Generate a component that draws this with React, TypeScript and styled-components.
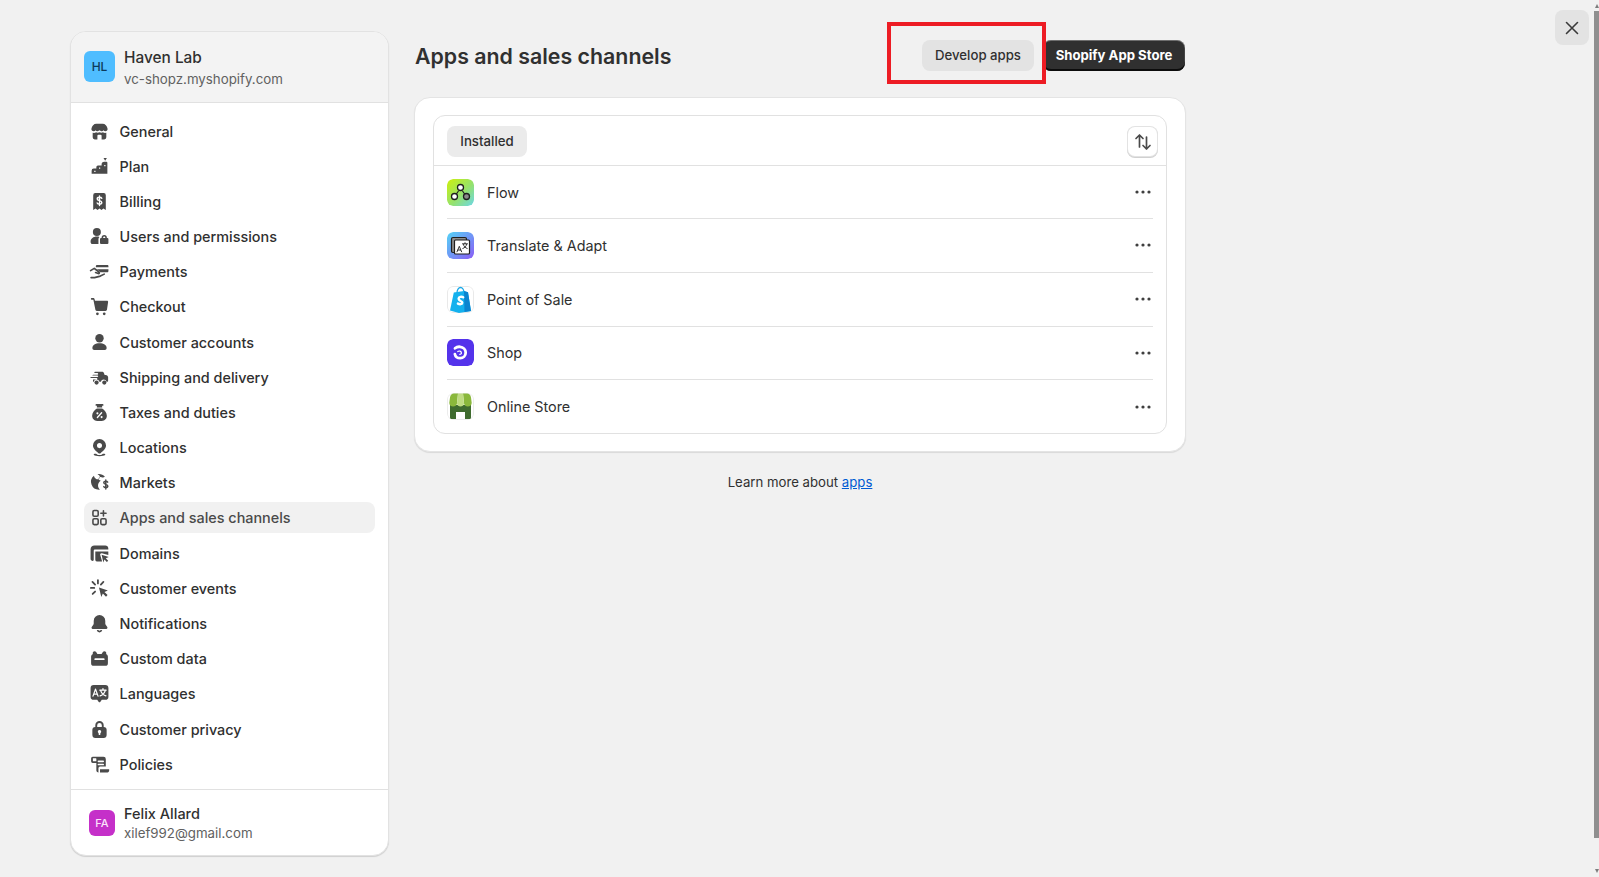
import { ReactNode } from "react";
import styled, { createGlobalStyle } from "styled-components";

const GlobalStyle = createGlobalStyle`
  html, body {
    margin: 0;
    height: 100%;
    overflow: hidden;
    background: #f1f1f1;
  }
  body {
    font-family: Inter, "Noto Sans", sans-serif;
    font-size: 14px;
    color: #303030;
  }
  * {
    box-sizing: border-box;
  }
`;

const Page = styled.div`
  display: flex;
  align-items: flex-start;
  gap: 26px;
  height: 877px;
  padding: 31px 0 0 70px;
  background: #f1f1f1;
`;

const Sidebar = styled.aside`
  display: flex;
  flex-direction: column;
  width: 319px;
  height: 825px;
  flex-shrink: 0;
  overflow: hidden;
  background: #fff;
  border: 1px solid #e2e2e2;
  border-radius: 16px;
  box-shadow: 0 1px 1px rgba(0, 0, 0, 0.14);
`;

const ShopHeader = styled.header`
  display: flex;
  align-items: center;
  gap: 9px;
  height: 71px;
  padding: 0 13px 1px;
  background: #f3f3f3;
  border-bottom: 1px solid #e1e1e1;
`;

const Avatar = styled.div<{ $size: number; $bg: string; $fg: string }>`
  display: flex;
  align-items: center;
  justify-content: center;
  width: ${({ $size }) => $size}px;
  height: ${({ $size }) => $size}px;
  flex-shrink: 0;
  border-radius: 6px;
  font-family: Inter, sans-serif;
  font-size: ${({ $size }) => ($size > 28 ? 12 : 11)}px;
  font-weight: 500;
  color: ${({ $fg }) => $fg};
  background: ${({ $bg }) => $bg};
`;

const AccountText = styled.div`
  display: flex;
  flex-direction: column;
  gap: 3px;
  padding-top: 4px;
`;

const AccountName = styled.div`
  font-size: 15.4px;
  line-height: 18px;
  font-weight: 500;
  color: #303030;
`;

const AccountMeta = styled.div`
  font-size: 13.3px;
  line-height: 18px;
  color: #616161;
`;

const Nav = styled.nav`
  display: flex;
  flex: 1;
  flex-direction: column;
  gap: 4.18px;
  padding: 12.6px 13px 0;
`;

const NavRow = styled.a<{ $active?: boolean }>`
  display: flex;
  align-items: center;
  gap: 9.6px;
  height: 31px;
  padding-left: 5px;
  border-radius: 8px;
  font-size: 14.4px;
  font-weight: 500;
  color: ${({ $active }) => ($active ? "#4a4a4a" : "#303030")};
  background: ${({ $active }) => ($active ? "#f1f1f1" : "transparent")};
`;

const NavIcon = styled.svg`
  width: 21px;
  height: 21px;
  flex-shrink: 0;
  fill: #4a4a4a;
`;

const UserFooter = styled.footer`
  display: flex;
  align-items: center;
  gap: 9px;
  height: 66px;
  padding: 0 13px 0 18px;
  border-top: 1px solid #e1e1e1;
`;

const UserText = styled.div`
  display: flex;
  flex-direction: column;
  gap: 1px;
  padding-top: 2px;
`;

const UserName = styled.div`
  font-size: 14.5px;
  line-height: 18px;
  font-weight: 500;
  color: #303030;
`;

const Main = styled.main`
  display: flex;
  flex-direction: column;
  width: 770px;
  padding-top: 9px;
`;

const TitleBar = styled.div`
  display: flex;
  align-items: center;
  justify-content: space-between;
  height: 31px;
`;

const Title = styled.h1`
  margin: 0;
  padding-top: 2px;
  font-size: 21.35px;
  line-height: 31px;
  font-weight: 600;
  color: #303030;
`;

const Actions = styled.div`
  display: flex;
  align-items: center;
  gap: 9px;
`;

const HighlightWrap = styled.div`
  position: relative;
`;

const Highlight = styled.div`
  position: absolute;
  top: -18px;
  right: -12px;
  bottom: -13px;
  left: -35px;
  border: 4px solid #ed1c24;
  pointer-events: none;
`;

const PlainButton = styled.button`
  display: block;
  width: 112px;
  height: 31px;
  padding: 0 0 2px;
  border: 0;
  border-radius: 8px;
  font: 500 13.2px Inter, sans-serif;
  color: #303030;
  background: #e3e3e3;
`;

const PrimaryButton = styled.button`
  display: block;
  width: 142px;
  height: 31px;
  padding: 0 0 2px;
  border: 0;
  border-radius: 8px;
  font: 650 13.15px Inter, sans-serif;
  color: #fff;
  background: #303030;
  box-shadow: inset 0 1px 0 rgba(255, 255, 255, 0.3), inset 0 -2px 0 #0c0c0c, inset 1px 0 0 rgba(255, 255, 255, 0.1), inset -1px 0 0 rgba(255, 255, 255, 0.1);
`;

const Card = styled.section`
  margin: 26px -1px 0;
  padding: 17px 18px;
  background: #fff;
  border: 1px solid #e4e4e4;
  border-radius: 16px;
  box-shadow: 0 1px 1px rgba(0, 0, 0, 0.1);
`;

const AppList = styled.div`
  border: 1px solid #e1e1e1;
  border-radius: 12px;
`;

const ListHead = styled.div`
  display: flex;
  align-items: center;
  justify-content: space-between;
  height: 50px;
  padding: 2px 9px 0 13px;
  border-bottom: 1px solid #e1e1e1;
`;

const Tab = styled.div`
  display: flex;
  align-items: center;
  justify-content: center;
  width: 80px;
  height: 31px;
  padding-bottom: 1px;
  border-radius: 8px;
  font-size: 13.25px;
  font-weight: 500;
  color: #303030;
  background: #ebebeb;
`;

const SortButton = styled.button`
  display: flex;
  align-items: center;
  justify-content: center;
  width: 29px;
  height: 29px;
  padding: 0;
  border: 0;
  border-radius: 7px;
  background: #fff;
  box-shadow: 0 0 0 1px #e3e3e3, 0 1px 0 1px #d0d0d0;
`;

const SortGlyph = styled.svg`
  width: 20px;
  height: 20px;
  fill: none;
  stroke: #4a4a4a;
  stroke-width: 1.7;
  stroke-linecap: round;
  stroke-linejoin: round;
`;

const AppRows = styled.div`
  display: flex;
  flex-direction: column;
  padding: 0 13px;
`;

const AppRow = styled.div`
  display: flex;
  align-items: center;
  gap: 13px;
  height: 53.75px;
  border-top: 1px solid #e1e1e1;

  &:first-child {
    height: 52px;
    border-top: 0;
  }
`;

const AppIcon = styled.svg`
  display: block;
  width: 27px;
  height: 27px;
  flex-shrink: 0;
  border-radius: 6px;
`;

const AppName = styled.div`
  flex: 1;
  font-size: 14.37px;
  color: #303030;
`;

const MoreDots = styled.svg`
  width: 20px;
  height: 20px;
  fill: #3f3f3f;
`;

const LearnMore = styled.p`
  margin: 20px 0 0;
  font-size: 13.2px;
  line-height: 20px;
  text-align: center;
  color: #303030;
`;

const InlineLink = styled.a`
  color: #005bd3;
  text-decoration: underline;
`;

const CloseButton = styled.button`
  position: fixed;
  top: 10px;
  left: 1555px;
  display: flex;
  align-items: center;
  justify-content: center;
  width: 34px;
  height: 35px;
  padding: 0;
  border: 0;
  border-radius: 8px;
  background: #e3e3e3;
`;

const CloseGlyph = styled.svg`
  width: 20px;
  height: 20px;
  fill: none;
  stroke: #3a3a3a;
  stroke-width: 1.6;
  stroke-linecap: round;
`;

const ScrollTrack = styled.div`
  position: fixed;
  top: 0;
  right: 0;
  bottom: 0;
  display: flex;
  flex-direction: column;
  align-items: center;
  width: 5px;
  background: #f1f1f1;
`;

const ScrollArrow = styled.div<{ $down?: boolean }>`
  width: 0;
  height: 0;
  flex-shrink: 0;
  margin: ${({ $down }) => ($down ? "auto 0 4px" : "4px 0 0")};
  border-left: 2.5px solid transparent;
  border-right: 2.5px solid transparent;
  ${({ $down }) => ($down ? "border-top: 4px solid #7d7d7d;" : "border-bottom: 4px solid #7d7d7d;")}
`;

const ScrollThumb = styled.div`
  width: 5px;
  height: 827px;
  margin-top: 3px;
  background: #8f8f8f;
`;

const Icon = ({ children }: { children: ReactNode }) => (
  <NavIcon viewBox="0 0 20 20" aria-hidden="true">{children}</NavIcon>
);

const navItems: { label: string; active?: boolean; icon: ReactNode }[] = [
  {
    label: "General",
    icon: (
      <>
        <path d="M7 2.500h6c2.400 0 4.200 1.900 4.700 4.800.2 1.300-.8 2.400-2 2.400-.8 0-1.500-.4-1.900-1-.4.6-1.200 1-2 1-.7 0-1.400-.3-1.800-.8-.4.5-1.100.8-1.800.8-.8 0-1.600-.4-2-1-.4.6-1.100 1-1.900 1-1.200 0-2.200-1.100-2-2.400C2.800 4.400 4.600 2.500 7 2.500z" />
        <path fillRule="evenodd" d="M3.500 11.200c1.200.3 2.400.1 3.200-.4.900.5 2.300.5 3.300 0 1 .5 2.400.5 3.300 0 .8.500 2 .7 3.200.4V15.500a2 2 0 0 1-2 2h-9a2 2 0 0 1-2-2zM8 17.500h4V14a1 1 0 0 0-1-1H9a1 1 0 0 0-1 1z" />
      </>
    ),
  },
  {
    label: "Plan",
    icon: (
      <>
        <path d="M13.800 2h3.200L15.400 4.500z" />
        <path fillRule="evenodd" d="M14.500 5.500h2a1 1 0 0 1 1 1v10.500H2.500v-3a2 2 0 0 1 2-2h2.500v-1.500A1.500 1.500 0 0 1 8.500 9h3.500V8a2.500 2.500 0 0 1 2.500-2.500zM5 14v1.200h1.200V14zm4.500-3v1.200h1.200V11zm5-2.500v1.200h1.200V8.500z" />
      </>
    ),
  },
  {
    label: "Billing",
    icon: (
      <>
        <path fillRule="evenodd" d="M6 2h8a2 2 0 0 1 2 2v14l-2.300-1.400-1.800 1.400-1.900-1.400-1.900 1.400-1.800-1.400L4 18V4a2 2 0 0 1 2-2z" />
        <path d="M12.200 7c-.3-.6-1.100-1-2.200-1-1.300 0-2.200.7-2.200 1.600 0 2.200 4.400 1.100 4.400 3.300 0 1-.9 1.600-2.200 1.600-1.100 0-1.900-.4-2.200-1.100M10 4.800v9" fill="none" stroke="#fff" strokeWidth="1.300" strokeLinecap="round" />
      </>
    ),
  },
  {
    label: "Users and permissions",
    icon: (
      <>
        <circle cx="7.500" cy="5.800" r="3.800" />
        <path d="M1.500 15c0-3 2.600-5 6-5 .9 0 1.700.1 2.400.4-.6.600-.9 1.300-.9 2.100V17.200H3.300c-1 0-1.800-.8-1.800-2.200z" />
        <path fillRule="evenodd" d="M12 11.500V11a2.500 2.500 0 0 1 5 0v.5h.5a1 1 0 0 1 1 1v3.700a1 1 0 0 1-1 1h-6a1 1 0 0 1-1-1v-3.700a1 1 0 0 1 1-1zm1.500 0h2V11a1 1 0 0 0-2 0z" />
      </>
    ),
  },
  {
    label: "Payments",
    icon: (
      <>
        <path d="M6.500 5c0-.8.600-1.300 1.300-1.300H17.500c.6 0 1 .4 1 1V6H6.500zM7.500 7.800h11v1.700c0 .7-.5 1.200-1.200 1.200H11l-1.800-1.500z" />
        <path d="M1.500 9.200 5 7l4.500 3.500c.8.600.2 1.700-.7 1.400l-2.500-.9M2 15.800h3.300l5.500-1.400 3.700-1.900" fill="none" stroke="#4a4a4a" strokeWidth="1.600" strokeLinecap="round" strokeLinejoin="round" />
      </>
    ),
  },
  {
    label: "Checkout",
    icon: (
      <>
        <path d="M2.500 2h1.300c.8 0 1.400.5 1.600 1.300L5.700 4.500H17.200c.7 0 1.100.6 1 1.200l-1.100 7.500c-.1.700-.7 1.100-1.300 1.100H7.400c-.7 0-1.200-.5-1.300-1.100L4.200 3.800c0-.2-.2-.3-.4-.3H2.500a.75.750 0 0 1 0-1.500z" />
        <circle cx="8" cy="17" r="1.300" />
        <circle cx="14.500" cy="17" r="1.300" />
      </>
    ),
  },
  {
    label: "Customer accounts",
    icon: (
      <>
        <circle cx="10" cy="6" r="4" />
        <path d="M3.200 15.300c0-2.800 2.800-4.600 6.800-4.600s6.800 1.800 6.800 4.600c0 1-.8 1.900-1.800 1.900H5c-1 0-1.800-.9-1.800-1.900z" />
      </>
    ),
  },
  {
    label: "Shipping and delivery",
    icon: (
      <>
        <path d="M6 4.500h6.300c.9 0 1.600.5 1.900 1.300l.7 1.700h1c1.300 0 2.300 1 2.300 2.300v3.200c0 .6-.4 1-1 1h-.5a2.800 2.800 0 0 0-5.400 0H9.900a2.800 2.800 0 0 0-5.400 0H3.800V12h3.400a.75.750 0 0 0 0-1.500H1.300c0-.5.400-.9.900-.9H8a.75.750 0 0 0 0-1.500H3.200c0-.5.400-.8.800-.8H8a.75.750 0 0 0 0-1.500H5C5.100 5 5.500 4.500 6 4.500z" />
        <circle cx="7.200" cy="14.800" r="2" />
        <circle cx="14.600" cy="14.800" r="2" />
      </>
    ),
  },
  {
    label: "Taxes and duties",
    icon: (
      <>
        <path d="M7 2h6a.8.800 0 0 1 0 1.600h-.5V5.300H7.500V3.600H7A.8.800 0 0 1 7 2z" />
        <path fillRule="evenodd" d="M7.500 6.300h5c2.200 1.300 4.500 3.900 4.500 6.900 0 2.800-1.900 4.800-4.800 4.800H7.800C4.900 18 3 16 3 13.200c0-3 2.300-5.600 4.500-6.900z" />
        <path d="M8 14.800 12 10.300" stroke="#fff" strokeWidth="1.300" strokeLinecap="round" />
        <circle cx="8" cy="10.800" r="1" fill="#fff" />
        <circle cx="12" cy="14.400" r="1" fill="#fff" />
      </>
    ),
  },
  {
    label: "Locations",
    icon: (
      <>
        <path fillRule="evenodd" d="M10 2a6.200 6.200 0 0 1 6.200 6.200c0 3-2.900 5.500-5.200 7.200-.6.400-1.400.4-2 0-2.300-1.700-5.200-4.200-5.200-7.200A6.200 6.200 0 0 1 10 2zm0 3.800a2.400 2.400 0 1 0 0 4.800 2.400 2.400 0 0 0 0-4.800z" />
        <path d="M5.200 16h1.500l1.800 1.100h3L13.300 16h1.500a.7.700 0 0 1 .5 1.200c-.8.600-2.700 1.100-5.300 1.100s-4.500-.5-5.300-1.100a.7.700 0 0 1 .5-1.200z" />
      </>
    ),
  },
  {
    label: "Markets",
    icon: (
      <>
        <path d="M9.500 2c2.200 0 4.200.9 5.600 2.300-.7 1-2.100 1.200-3.200.6-1-.5-2.100-.2-2.600.8-.3.700-.1 1.400.5 1.800l1.400.9c-1.500.9-2.600 2.500-2.600 4.400 0 1.600.7 3 1.800 4-.3.100-.6.100-.9.100a7.500 7.500 0 0 1-4.800-13.300c.3 1.400 1 2.400 2.100 3 1.200.7 2.300.4 3-.5.900-1.100.6-2.600-.5-3.300l-1.100-.6c.1-.1.200-.2.800-.2z" />
        <path d="M17.800 9.700c-.3-.5-1-.9-1.800-.9-1.100 0-1.900.6-1.900 1.500 0 2 3.800 1 3.800 3.100 0 .9-.8 1.500-1.900 1.500-.9 0-1.600-.4-1.900-1M16 7.600v8.500" fill="none" stroke="#4a4a4a" strokeWidth="1.400" strokeLinecap="round" />
      </>
    ),
  },
  {
    label: "Apps and sales channels",
    active: true,
    icon: (
      <g fill="none" stroke="#4a4a4a" strokeWidth="1.500" strokeLinecap="round" strokeLinejoin="round">
        <rect x="3.750" y="3.250" width="5" height="5.500" rx="1.200" />
        <rect x="3.750" y="11.250" width="5" height="5.500" rx="1.200" />
        <rect x="11.250" y="11.250" width="5" height="5.500" rx="1.200" />
        <path d="M13.750 3.500v5M11.250 6h5" />
      </g>
    ),
  },
  {
    label: "Domains",
    icon: (
      <>
        <path d="M1.500 6c0-2.200 1.500-3.700 3.700-3.700h10.300c1.700 0 2.900 1.200 2.900 2.900v1.100H5.500a1 1 0 0 0-1 1v9c0 .5-.4.800-.8.800-1.300 0-2.200-.9-2.200-2.100z" />
        <path d="M6 8h12.400v3.500l-6.100-1.700c-1-.3-1.900.6-1.600 1.600l1.800 6.100H7.500A1.500 1.500 0 0 1 6 16z" />
        <path d="M12 11.300l6.800 2-2.800 1.200 2.300 2.300-1.300 1.300-2.300-2.300-1 2.800z" />
      </>
    ),
  },
  {
    label: "Customer events",
    icon: (
      <>
        <path d="M9.500 9l8.500 2.800-3.300 1.500 3 3-1.500 1.500-3-3-1.500 3.400z" />
        <path d="M8.500 2v3.200M3.300 3.700l2.500 2.500M1.800 9.500H5M13.700 3.700l-2.400 2.500M3.500 15.200l2.300-2.300" fill="none" stroke="#4a4a4a" strokeWidth="1.700" strokeLinecap="round" />
      </>
    ),
  },
  {
    label: "Notifications",
    icon: (
      <>
        <path d="M10 2a5.500 5.500 0 0 1 5.500 5.500v2.300c0 .5.100 1 .4 1.400l1.500 2.200c.5.800 0 1.800-.9 1.800H3.500c-.9 0-1.400-1-.9-1.800l1.500-2.200c.3-.4.400-.9.400-1.400V7.500A5.500 5.500 0 0 1 10 2z" />
        <path d="M7.400 16.200h1.500a1.200 1.200 0 0 0 2.200 0h1.500A2.700 2.700 0 0 1 10 18.500a2.700 2.700 0 0 1-2.600-2.300z" />
      </>
    ),
  },
  {
    label: "Custom data",
    icon: (
      <path fillRule="evenodd" d="M5.300 3c.6 0 1.200.3 1.500.8L8 5.700h4l1.200-1.900c.3-.5.900-.8 1.500-.8 1 0 1.700.7 1.700 1.600v1.300c1.100.3 1.600 1.200 1.600 2.400V14.500A2.500 2.500 0 0 1 15.500 17h-11A2.500 2.500 0 0 1 2 14.500V8.300c0-1.200.5-2.100 1.600-2.400V4.600C3.600 3.700 4.300 3 5.300 3zM6 9.700a.9.900 0 0 0 0 1.800h8a.9.900 0 0 0 0-1.800z" />
    ),
  },
  {
    label: "Languages",
    icon: (
      <>
        <path d="M4.500 2h11A3 3 0 0 1 18.500 5v8a3 3 0 0 1-3 3h-3.300L10.700 18c-.4.500-1 .5-1.400 0l-1.500-2H4.500A3 3 0 0 1 1.500 13V5a3 3 0 0 1 3-3z" />
        <path d="M3.800 12.500 6.200 5.800l2.400 6.700M4.800 10.500h2.800M10.300 6.800h6M13.300 5.300v1.500M11 6.800c.6 2.600 2.500 4.600 5.100 5.500M15.600 6.800c-.6 2.600-2.500 4.600-5 5.500" fill="none" stroke="#fff" strokeWidth="1.200" strokeLinecap="round" strokeLinejoin="round" />
      </>
    ),
  },
  {
    label: "Customer privacy",
    icon: (
      <path fillRule="evenodd" d="M6 7.500V6a4 4 0 0 1 8 0v1.500A2.800 2.800 0 0 1 16.800 10.300v5A2.800 2.800 0 0 1 14 18H6a2.800 2.800 0 0 1-2.800-2.700v-5A2.800 2.800 0 0 1 6 7.500zm1.800 0h4.400V6a2.200 2.200 0 0 0-4.400 0zM10 10.500a1.600 1.600 0 0 0-.8 3v1a.8.800 0 0 0 1.600 0v-1a1.600 1.600 0 0 0-.8-3z" />
    ),
  },
  {
    label: "Policies",
    icon: (
      <>
        <path fillRule="evenodd" d="M3.500 2.500h10.300A2.200 2.200 0 0 1 16 4.700V12h-5.500a1.500 1.500 0 0 0-1.500 1.500V17.500h-.3A1.700 1.700 0 0 1 7 15.800V8.500H3.500A1.500 1.500 0 0 1 2 7V4A1.500 1.500 0 0 1 3.500 2.500zm.2 1.600V7H7V4.500c0-.2-.2-.4-.4-.4zM9 6.200a.8.800 0 0 0 0 1.600h4.500a.8.800 0 0 0 0-1.600zm0 3a.8.800 0 0 0 0 1.600h4.500a.8.800 0 0 0 0-1.600z" />
        <path d="M10.500 14.500h8.700v1.300c0 .9-.7 1.700-1.500 1.700H10.500z" />
      </>
    ),
  },
];

const FlowIcon = () => (
  <AppIcon viewBox="0 0 27 27" aria-hidden="true">
    <defs>
      <linearGradient id="flowBg" x1="0" y1="0" x2="1" y2="1">
        <stop offset="0" stopColor="#cdf00c" />
        <stop offset=".55" stopColor="#95e26c" />
        <stop offset="1" stopColor="#6bd7e8" />
      </linearGradient>
    </defs>
    <rect width="27" height="27" rx="6" fill="url(#flowBg)" />
    <path d="M11.500 12 9 15.500M15.500 12l2.500 3.500" stroke="#1f1f1f" strokeWidth="1.200" />
    <circle cx="13.500" cy="8.500" r="3" fill="#fff" stroke="#1f1f1f" strokeWidth="1.300" />
    <circle cx="7.500" cy="17.500" r="3" fill="#fff" stroke="#1f1f1f" strokeWidth="1.300" />
    <circle cx="19.500" cy="17.500" r="3" fill="#8a8a8a" stroke="#1f1f1f" strokeWidth="1.300" />
  </AppIcon>
);

const TranslateIcon = () => (
  <AppIcon viewBox="0 0 27 27" aria-hidden="true">
    <defs>
      <linearGradient id="translateBg" x1="0" y1="0" x2="1" y2="1">
        <stop offset="0" stopColor="#55d4f6" />
        <stop offset="1" stopColor="#8a5cf6" />
      </linearGradient>
    </defs>
    <rect width="27" height="27" rx="6" fill="url(#translateBg)" />
    <rect x="4.500" y="5.500" width="15" height="15" rx="1.500" fill="#8d8d8d" stroke="#1f1f1f" strokeWidth="1.200" />
    <rect x="7.500" y="8" width="15" height="14" rx="1" fill="#fff" stroke="#1f1f1f" strokeWidth="1.200" />
    <path d="M10 19.800l2.300-5.500 2.300 5.500M11 18h2.700M15.500 11.800h5M18 10.700v1.100M16.300 12.300c.5 2 1.800 3.500 3.900 4.200M19.700 12.300c-.5 2-1.800 3.500-3.900 4.200" fill="none" stroke="#1f1f1f" strokeWidth=".9" strokeLinecap="round" />
  </AppIcon>
);

const PosIcon = () => (
  <AppIcon viewBox="0 0 27 27" aria-hidden="true">
    <rect x=".5" y=".5" width="26" height="26" rx="5.500" fill="#fff" stroke="#e9e9e9" />
    <path d="M10 7c0-3 1.500-5.500 3.500-5.500S17 4 17 7" fill="none" stroke="#1aa9e8" strokeWidth="1.300" />
    <path d="M6.800 6.500 17 5l4 1.200L24 25l-12 2-9-2.500z" fill="#14b1ee" />
    <path d="M17 5l4 1.200L24 25l-6.500 1z" fill="#0a84d0" />
    <path d="M16.200 11.300c-1.500-.9-4.600-.6-4.600 1.500 0 2.300 3.700 2 3.700 4 0 1.600-2.500 1.800-4.400.8" fill="none" stroke="#fff" strokeWidth="2.400" strokeLinecap="round" />
  </AppIcon>
);

const ShopIcon = () => (
  <AppIcon viewBox="0 0 27 27" aria-hidden="true">
    <rect width="27" height="27" rx="6" fill="#5433eb" />
    <path d="M8 9.300c1.300-1.100 3-1.700 5-1.500 3.300.3 5.700 2.800 5.700 5.800 0 3.100-2.400 5.600-5.500 5.600-2.600 0-4.800-1.700-5.300-4" fill="none" stroke="#fff" strokeWidth="2.800" strokeLinecap="round" />
    <path d="M10.800 12.500c1.200-1 3.400-.4 3.600 1.200.1 1-.6 1.700-1.600 1.700" fill="none" stroke="#fff" strokeWidth="1.200" strokeLinecap="round" />
  </AppIcon>
);

const StoreIcon = () => (
  <AppIcon viewBox="0 0 27 27" aria-hidden="true">
    <rect x=".5" y=".5" width="26" height="26" rx="5.500" fill="#fff" stroke="#ececec" />
    <path d="M3 12h21v12.500a1.500 1.500 0 0 1-1.500 1.500H18v-7h-9v7H4.500A1.500 1.500 0 0 1 3 24.500z" fill="#3f6b2f" />
    <path d="M7 .5h4L10 10.500c-.3 2-2 3-3.800 3-2.400 0-4-1.500-3.900-3.800L3 4.500C3.300 2 5 .5 7 .5z" fill="#8ab83c" />
    <path d="M20 .5h-4l1 10c.3 2 2 3 3.800 3 2.400 0 4-1.500 3.900-3.800L24 4.500C23.700 2 22 .5 20 .5z" fill="#8ab83c" />
    <path d="M11 .5h5l1 10c-.2 2-1.700 3-3.500 3s-3.300-1-3.500-3z" fill="#bfdc82" />
  </AppIcon>
);

const apps: { name: string; icon: ReactNode }[] = [
  { name: "Flow", icon: <FlowIcon /> },
  { name: "Translate & Adapt", icon: <TranslateIcon /> },
  { name: "Point of Sale", icon: <PosIcon /> },
  { name: "Shop", icon: <ShopIcon /> },
  { name: "Online Store", icon: <StoreIcon /> },
];

export default function App() {
  return (
    <>
      <GlobalStyle />
      <Page>
        <Sidebar>
          <ShopHeader>
            <Avatar $size={31} $bg="#4fbdff" $fg="#0c3a5a">HL</Avatar>
            <AccountText>
              <AccountName>Haven Lab</AccountName>
              <AccountMeta>vc-shopz.myshopify.com</AccountMeta>
            </AccountText>
          </ShopHeader>
          <Nav>
            {navItems.map((item) => (
              <NavRow key={item.label} $active={item.active}>
                <Icon>{item.icon}</Icon>
                {item.label}
              </NavRow>
            ))}
          </Nav>
          <UserFooter>
            <Avatar $size={26} $bg="#c530c9" $fg="#fbe3fb">FA</Avatar>
            <UserText>
              <UserName>Felix Allard</UserName>
              <AccountMeta>xilef992@gmail.com</AccountMeta>
            </UserText>
          </UserFooter>
        </Sidebar>
        <Main>
          <TitleBar>
            <Title>Apps and sales channels</Title>
            <Actions>
              <HighlightWrap>
                <PlainButton>Develop apps</PlainButton>
                <Highlight />
              </HighlightWrap>
              <PrimaryButton>Shopify App Store</PrimaryButton>
            </Actions>
          </TitleBar>
          <Card>
            <AppList>
              <ListHead>
                <Tab>Installed</Tab>
                <SortButton aria-label="Sort">
                  <SortGlyph viewBox="0 0 20 20">
                    <path d="M6.500 15V3M3 6.500 6.500 3 10 6.500M13.500 5v12M10 13.500l3.500 3.500 3.500-3.500" />
                  </SortGlyph>
                </SortButton>
              </ListHead>
              <AppRows>
                {apps.map((app) => (
                  <AppRow key={app.name}>
                    {app.icon}
                    <AppName>{app.name}</AppName>
                    <MoreDots viewBox="0 0 20 20">
                      <circle cx="4" cy="10" r="1.600" />
                      <circle cx="10" cy="10" r="1.600" />
                      <circle cx="16" cy="10" r="1.600" />
                    </MoreDots>
                  </AppRow>
                ))}
              </AppRows>
            </AppList>
          </Card>
          <LearnMore>
            Learn more about <InlineLink href="#">apps</InlineLink>
          </LearnMore>
        </Main>
      </Page>
      <CloseButton aria-label="Close">
        <CloseGlyph viewBox="0 0 20 20">
          <path d="M4.500 4.500l11 11M15.500 4.500l-11 11" />
        </CloseGlyph>
      </CloseButton>
      <ScrollTrack>
        <ScrollArrow />
        <ScrollThumb />
        <ScrollArrow $down />
      </ScrollTrack>
    </>
  );
}
